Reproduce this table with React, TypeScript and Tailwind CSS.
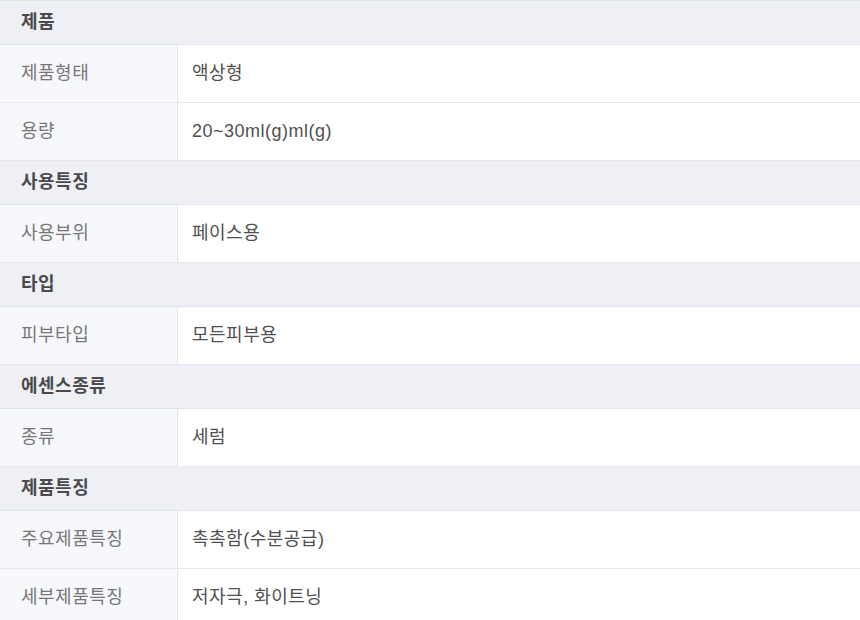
import React from 'react';

type Row = { label: string; value: string };
type Section = { title: string; rows: Row[] };

const sections: Section[] = [
    { title: '제품', rows: [{ label: '제품형태', value: '액상형' }, { label: '용량', value: '20~30ml(g)ml(g)' }] },
    { title: '사용특징', rows: [{ label: '사용부위', value: '페이스용' }] },
    { title: '타입', rows: [{ label: '피부타입', value: '모든피부용' }] },
    { title: '에센스종류', rows: [{ label: '종류', value: '세럼' }] },
    {
        title: '제품특징',
        rows: [
            { label: '주요제품특징', value: '촉촉함(수분공급)' },
            { label: '세부제품특징', value: '저자극, 화이트닝' },
        ],
    },
];

const App: React.FC = () => {
    return (
        <div
            className="w-[860px] h-[620px] overflow-hidden bg-white border-t border-[#dfe2e8] text-[18px] tracking-[0.5px] text-[#555]"
            style={{ fontFamily: '"Liberation Sans", "Noto Sans CJK KR", sans-serif' }}
        >
            {sections.map((section) => (
                <div key={section.title}>
                    {/* Section header */}
                    <div className="h-[44px] flex items-center px-[21px] bg-[#eef0f5] border-b border-[#e0e3e9] font-semibold text-[#4a4a4a]">
                        {section.title}
                    </div>
                    {section.rows.map((row) => (
                        <div key={row.label} className="h-[58px] flex border-b border-[#e6e8ed]">
                            <div className="w-[178px] shrink-0 flex items-center px-[21px] bg-[#f7f8fb] border-r border-[#e3e5ea] text-[#777]">
                                {row.label}
                            </div>
                            <div className="flex-1 flex items-center px-[14px] bg-white text-[#505050]">{row.value}</div>
                        </div>
                    ))}
                </div>
            ))}
        </div>
    );
};

export default App;
